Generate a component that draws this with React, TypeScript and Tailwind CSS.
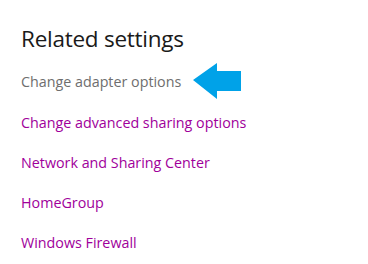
import React from 'react';

const links = [
  'Change advanced sharing options',
  'Network and Sharing Center',
  'HomeGroup',
  'Windows Firewall',
];

function ArrowLeft() {
  return (
    <svg width="50" height="38" viewBox="0 0 50 38" className="ml-[12px] shrink-0">
      <path d="M0 17 L24 0 L24 8 L48 8 L48 28 L24 28 L24 36 Z" fill="#00a2e8" />
    </svg>
  );
}

export default function App() {
  return (
    <div className="w-[368px] h-[264px] bg-white pl-[21px] pt-[23px] font-['Open_Sans',sans-serif]">
      <h2 className="text-[22.5px] leading-[32px] text-[#1a1a1a] tracking-[-0.25px]">Related settings</h2>
      <div className="mt-[7px] flex items-center h-[40px]">
        <span className="text-[14.3px] text-[#6e6e6e]">Change adapter options</span>
        <ArrowLeft />
      </div>
      <ul className="mt-[1px] flex flex-col">
        {links.map((l) => (
          <li key={l} className="h-[40px] flex items-center text-[14.3px] text-[#a0009b]">
            {l}
          </li>
        ))}
      </ul>
    </div>
  );
}
